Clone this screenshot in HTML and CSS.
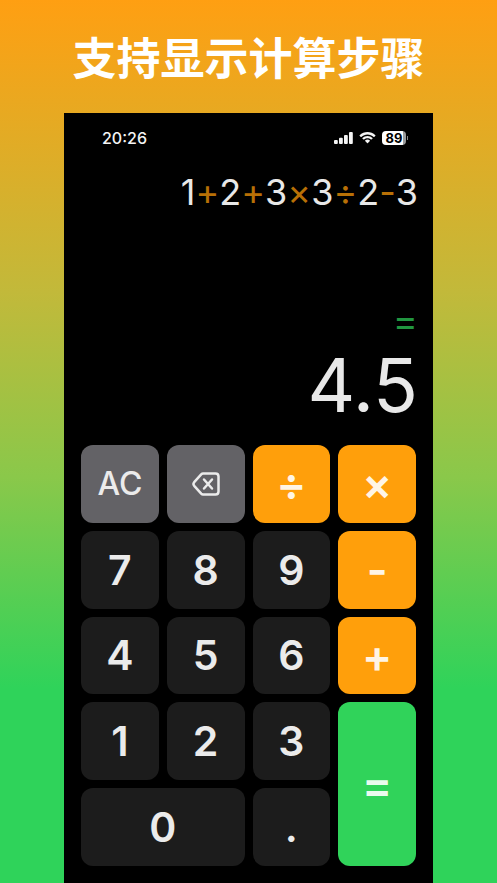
FILE: index.html
```html
<!DOCTYPE html>
<html lang="zh-CN">
<head>
<meta charset="utf-8">
<meta name="viewport" content="width=device-width, initial-scale=1">
<title>支持显示计算步骤</title>
<link rel="stylesheet" href="styles.css">
</head>
<body>
<h1 class="headline">支持显示计算步骤</h1>
<main class="phone">
  <header class="status">
    <span class="time">20:26</span>
    <div class="indicators">
      <svg class="signal" viewBox="0 0 19 12" aria-hidden="true">
        <rect x="0" y="8" width="3.8" height="4" rx="1"/>
        <rect x="5" y="5.8" width="3.8" height="6.2" rx="1"/>
        <rect x="10" y="3" width="3.8" height="9" rx="1"/>
        <rect x="15" y="0" width="3.8" height="12" rx="1"/>
      </svg>
      <svg class="wifi" viewBox="0 0 17 12" aria-hidden="true">
        <path d="M8.5 2.4c2.3 0 4.5.9 6.2 2.5.1.1.3.1.5 0l1.2-1.2c.1-.2.1-.4 0-.5C12-1 5-1 .6 3.2c-.1.1-.1.3 0 .5l1.200 1.200c.2.1.4.1.5 0C4 3.300 6.200 2.400 8.500 2.400z"/>
        <path d="M8.500 6.300c1.300 0 2.500.5 3.400 1.300.2.1.4.1.5 0l1.200-1.200c.2-.2.2-.4 0-.5-2.900-2.700-7.300-2.700-10.200 0-.2.1-.2.3 0 .5l1.200 1.200c.1.1.3.1.5 0 .9-.8 2.100-1.300 3.400-1.300z"/>
        <path d="M10.900 9c.1-.1.1-.4 0-.5-1.400-1.200-3.400-1.200-4.800 0-.1.1-.1.400 0 .500l2.200 2.200c.1.100.3.100.4 0z"/>
      </svg>
      <span class="battery">89</span>
    </div>
  </header>
  <section class="display">
    <div class="expression">1<i>+</i>2<i>+</i>3<i>×</i>3<i>÷</i>2<i>-</i>3</div>
    <div class="equals">=</div>
    <output class="result">4.5</output>
  </section>
  <section class="keys">
    <button class="key util">AC</button>
    <button class="key util" aria-label="退格">
      <svg class="erase" viewBox="0 0 28 24" aria-hidden="true">
        <path d="M11 1.500H23.500Q26.500 1.500 26.500 4.500V19.500Q26.500 22.500 23.500 22.500H11Q10 22.500 9.200 21.700L2.200 13.800Q.7 12 2.200 10.200L9.200 2.300Q10 1.500 11 1.500Z"/>
        <path d="M12 7.500L20 16.500M20 7.500L12 16.500"/>
      </svg>
    </button>
    <button class="key op">÷</button>
    <button class="key op">×</button>
    <button class="key">7</button>
    <button class="key">8</button>
    <button class="key">9</button>
    <button class="key op">-</button>
    <button class="key">4</button>
    <button class="key">5</button>
    <button class="key">6</button>
    <button class="key op">+</button>
    <button class="key">1</button>
    <button class="key">2</button>
    <button class="key">3</button>
    <button class="key submit">=</button>
    <button class="key wide">0</button>
    <button class="key">.</button>
  </section>
</main>
</body>
</html>
```
FILE: styles.css
```css
* {
  box-sizing: border-box;
}

body {
  margin: 0;
  min-height: 100vh;
  display: flex;
  flex-direction: column;
  background: linear-gradient(#ff9f12 0%, #c2b93a 33%, #8ac84a 54%, #2fd35a 78%);
  font-family: Inter, "Noto Sans CJK SC", sans-serif;
}

.headline {
  margin: 0;
  padding-top: 24px;
  height: 113px;
  font-family: "Noto Sans CJK SC", sans-serif;
  font-size: 44px;
  line-height: 64px;
  font-weight: 700;
  text-align: center;
  color: #fff;
}

.phone {
  flex: 1;
  margin: 0 64px;
  padding: 16px 17px;
  background: #000;
  color: #e8e8e8;
}

.status {
  display: flex;
  justify-content: space-between;
  align-items: center;
  height: 18px;
  padding: 0 8px 0 21px;
  color: #f4f4f4;
}

.time {
  font-size: 16px;
  font-weight: 500;
}

.indicators {
  display: flex;
  align-items: center;
  gap: 6px;
}

.signal,
.wifi {
  height: 12px;
  fill: #f4f4f4;
}

.signal {
  width: 19px;
}

.wifi {
  width: 17px;
}

.battery {
  position: relative;
  width: 24px;
  height: 14px;
  margin-right: 2px;
  border-radius: 4px;
  background: linear-gradient(90deg, #fff 88%, #999 88%);
  color: #000;
  font-size: 13px;
  line-height: 14px;
  font-weight: 700;
  text-align: center;
}

.battery::after {
  content: "";
  position: absolute;
  left: 25px;
  top: 5px;
  width: 1px;
  height: 4px;
  background: #888;
}

.display {
  display: flex;
  flex-direction: column;
  height: 298px;
  margin-right: -2px;
  padding-bottom: 16px;
  text-align: right;
}

.expression {
  margin-top: 21px;
  font-size: 36px;
  line-height: 48px;
}

.expression i {
  display: inline-block;
  font-style: normal;
  color: #b87006;
}

.equals {
  margin-top: auto;
  font-size: 38px;
  line-height: 42px;
  color: #219640;
}

.result {
  font-size: 74px;
  line-height: 88px;
}

.keys {
  display: grid;
  grid-template-columns: repeat(4, 1fr);
  gap: 8px;
}

.key {
  aspect-ratio: 1;
  width: 100%;
  display: flex;
  align-items: center;
  justify-content: center;
  padding: 0;
  border: 0;
  border-radius: 12px;
  background: #1c1c1c;
  color: #ebebeb;
  font-family: inherit;
  font-size: 41px;
  font-weight: 600;
}

.util {
  background: #636266;
  font-size: 32px;
  font-weight: 500;
}

.op,
.submit {
  font-size: 45px;
}

.op {
  background: #ff9f0b;
  color: #fff5e6;
}

.submit {
  grid-row: span 2;
  aspect-ratio: auto;
  background: #30d35a;
  color: #eafbee;
}

.wide {
  grid-column: span 2;
  aspect-ratio: auto;
}

.erase {
  width: 28px;
  height: 24px;
  fill: none;
  stroke: #ebebeb;
  stroke-width: 2.500;
  stroke-linecap: round;
  stroke-linejoin: round;
}
```
